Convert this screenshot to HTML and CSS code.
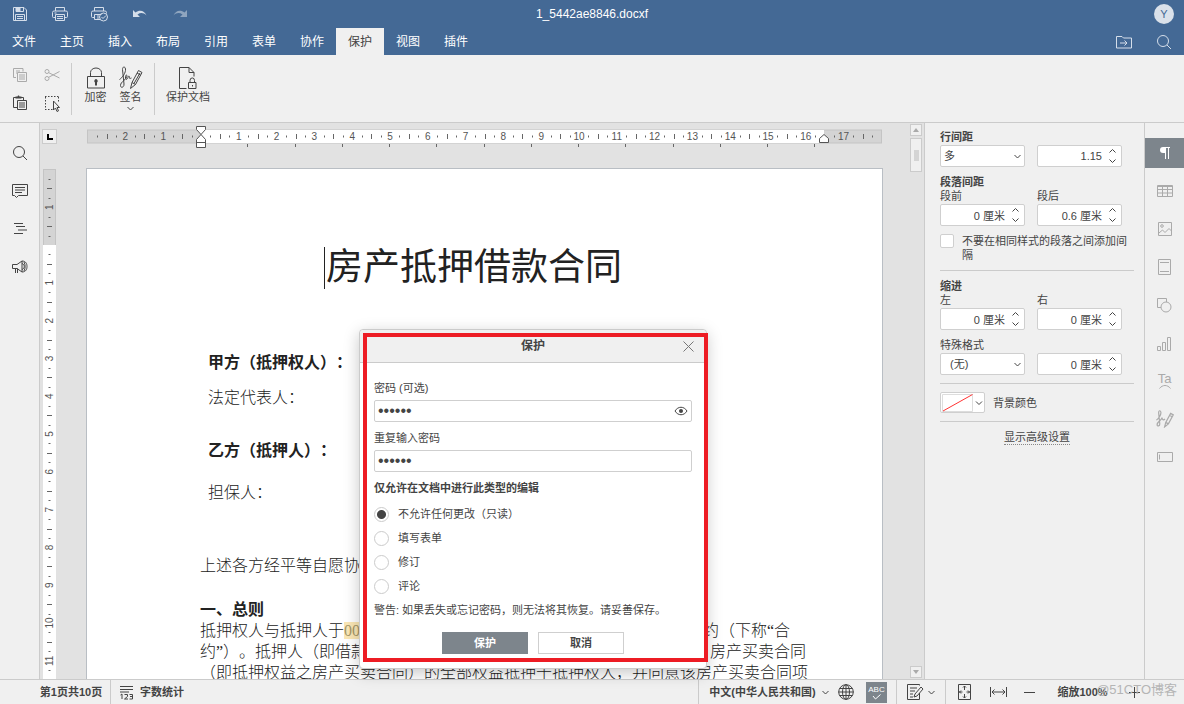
FILE: index.html
```
<!DOCTYPE html>
<html lang="zh-CN">
<head>
<meta charset="utf-8">
<title>1_5442ae8846.docxf</title>
<link rel="stylesheet" href="styles.css">
</head>
<body>
<div class="app">
  <header class="header">
    <div class="titlebar">
      <div class="quick">
        <button class="qbtn" aria-label="保存"><svg width="16" height="16" viewBox="0 0 16 16"><path d="M1.500 1.500h10.500l2.500 2.500v10.500h-13z M4 1.500v4h7.500v-4 M3.500 14.500v-6h9v6 M5 10.500h6 M5 12.500h6"/><path d="M4 2h4.500v3.500h-4.500z" class="solid"/></svg></button>
        <button class="qbtn" aria-label="打印"><svg width="16" height="16" viewBox="0 0 16 16"><path d="M3.500 5v-3.500h9v3.500 M3.500 11.500h-2a1 1 0 0 1-1-1v-4a1.500 1.500 0 0 1 1.500-1.500h12a1.500 1.500 0 0 1 1.500 1.500v4a1 1 0 0 1-1 1h-2 M3.500 8.500h9v6h-9z M5 10.500h6 M5 12.500h6 M2.500 7h2"/></svg></button>
        <button class="qbtn" aria-label="快速打印"><svg width="18" height="16" viewBox="0 0 18 16"><path d="M3.500 5v-3.500h9v3.500 M3.500 11.500h-2a1 1 0 0 1-1-1v-4a1.500 1.500 0 0 1 1.500-1.500h12a1.500 1.500 0 0 1 1.500 1.500v1 M9 13.500h-5.500v-5h7 M7 8.500v5"/><circle cx="12.500" cy="11" r="4"/><path d="M10.500 11l1.500 1.500 3-3"/></svg></button>
        <button class="qbtn" aria-label="撤消"><svg width="16" height="16" viewBox="0 0 16 16"><path class="solid" d="M1 4v7h7l-2.500-2.500c3-2 6-2 9 1-2-5-7-6-11-3z"/></svg></button>
        <button class="qbtn dim" aria-label="重做"><svg width="16" height="16" viewBox="0 0 16 16"><path class="solid" d="M15 4v7h-7l2.500-2.500c-3-2-6-2-9 1 2-5 7-6 11-3z"/></svg></button>
      </div>
      <div class="doc-name">1_5442ae8846.docxf</div>
      <div class="user"><span class="avatar">Y</span></div>
    </div>
    <nav class="tabs">
      <button>文件</button><button>主页</button><button>插入</button><button>布局</button><button>引用</button><button>表单</button><button>协作</button><button class="active">保护</button><button>视图</button><button>插件</button>
      <div class="tabs-right">
        <button class="qbtn" aria-label="打开文件所在位置"><svg width="16" height="14" viewBox="0 0 16 14"><path d="M.5 1.500h5.500l1.500 1.500h8v10h-15z M4 8h7 M8.500 5.500l2.500 2.500-2.500 2.500"/></svg></button>
        <button class="qbtn" aria-label="搜索"><svg width="16" height="16" viewBox="0 0 16 16"><circle cx="7" cy="7" r="5.500"/><path d="M11 11l4 4"/></svg></button>
      </div>
    </nav>
  </header>

  <div class="toolbar">
    <div class="clip-group">
      <button class="ico pale" aria-label="复制"><svg width="16" height="16" viewBox="0 0 16 16"><path d="M4 10.500h-2.500v-9h9.500v3 M4 4h4 M4 6h1 M5.500 5.500h9v9h-9z M7 8h6 M7 10h6 M7 12h6"/></svg></button>
      <button class="ico pale" aria-label="剪切"><svg width="16" height="14" viewBox="0 0 16 14"><circle cx="3" cy="3.500" r="2"/><circle cx="3" cy="10.500" r="2"/><path d="M4.700 4.700l10.800 5.300 M4.700 9.300l10.800-5.800"/></svg></button>
      <button class="ico" aria-label="粘贴"><svg width="16" height="16" viewBox="0 0 16 16"><path d="M5 12.500h-3.500v-10h10v3 M5.500 5.500h9v9h-9z M7 8h6 M7 10h6 M7 12h6"/><path class="solid" d="M3.500 3.500v-2h2l.5-1h1l.5 1h2v2z"/></svg></button>
      <button class="ico" aria-label="全选"><svg width="17" height="17" viewBox="0 0 17 17"><path stroke-dasharray="1.500 1.500" d="M1 1.500h14 M1 14.500h8 M1.500 2v13 M14.500 2v5"/><path d="M9.500 6v9l2-2 1.500 3.500 1.500-.7-1.500-3.300h2.500z" fill="#f0f0f0"/></svg></button>
    </div>
    <div class="tool-group">
      <button class="tool"><svg width="18" height="22" viewBox="0 0 18 22"><path d="M.5 9.500h17v11.500h-17z M3.500 9.500v-4a5.500 4.500 0 0 1 11 0v4"/><path class="solid" d="M9 12a2 2 0 0 1 1 3.500v3h-2v-3a2 2 0 0 1 1-3.500z"/></svg><span>加密</span></button>
      <button class="tool"><svg width="24" height="24" viewBox="0 0 24 24"><path d="M.5 13.500c3-2 6.500-7 6-10.500-.5-3-3-2.500-3 .5l1.500 14.500c.3 3.500-3.500 4.500-3.500 1.500 0-4 6.500-6 6.500-9.500 0-1.500-1.500-1-1.500.5v2c0 1.500 2 1 2.500-1 .5-2 1.500-2 1.500 0s1 .5 2 .5 M11.500 22.500l1.500-6 6.500-12 3.500 2-6.500 12z M13 16.500l3.500 2 M18 7l3.500 2 M15 17.500l6-10.500"/></svg><span>签名</span><svg class="caret" width="7" height="5" viewBox="0 0 7 5"><path d="M.5 1l3 3 3-3"/></svg></button>
    </div>
    <div class="tool-group">
      <button class="tool wide"><svg width="18" height="22" viewBox="0 0 18 22"><path d="M7.500 21.500h-7v-21h9.500l5 5v4 M10 .5v5h5 M9.500 15.500h7.500v6h-7.500z M11 15.500v-2a2.200 2.500 0 0 1 4.500 0v2 M13.500 18v1.500"/></svg><span>保护文档</span></button>
    </div>
  </div>

  <main class="main">
    <aside class="rail-left">
      <button class="ico" aria-label="查找"><svg width="16" height="16" viewBox="0 0 16 16"><circle cx="7" cy="7" r="5.500"/><path d="M11 11l4 4"/></svg></button>
      <button class="ico" aria-label="批注"><svg width="18" height="16" viewBox="0 0 18 16"><path d="M1.500 1.500h15v11h-9l-2 2-2-2h-2z M4 4.500h10 M4 7h10 M4 9.500h7"/></svg></button>
      <button class="ico" aria-label="标题"><svg width="16" height="14" viewBox="0 0 16 14"><path d="M2 1.500h9 M4 4.500h9 M6 8h9 M2 11.500h9"/></svg></button>
      <button class="ico" aria-label="反馈"><svg width="16" height="14" viewBox="0 0 16 14"><path d="M.5 4.500h4.500l5-3.500v11l-5-3.500h-4.500z M3.500 8.500v4.500 M5.500 8.500v4.500 M10 1c4 0 5 3 5 5.500s-1 5.500-5 5.500 M10 3.500c3 1 3 5 0 6 M12 2c1.500 3 1.500 6 0 9"/></svg></button>
    </aside>

    <section class="editor">
      <div class="tab-stop"><span></span></div>
      <svg class="ruler-h" id="rulerH" width="795" height="45" viewBox="0 0 795 45">
        <rect x=".5" y="7" width="794" height="13" class="r-out"/>
        <rect x="114" y="7" width="623" height="13" class="r-in"/>
        <g id="ticksH"></g>
        <path class="marker" d="M109.500 3.500h9v3l-4.500 5 4.500 5v8h-9v-8l4.500-5-4.500-5z M109.500 19.500h9"/>
        <path class="marker" d="M732.500 19.500v-4l4.500-4 4.500 4v4z"/>
      </svg>
      <div class="ruler-v"><svg id="rulerV" width="13" height="900" viewBox="0 0 13 900">
        <rect x=".5" y=".5" width="12" height="76" class="r-out"/>
        <rect x="0" y="76" width="13" height="900" class="r-in"/>
        <g id="ticksV"></g>
      </svg></div>
      <div class="canvas">
        <article class="page">
          <h1>房产抵押借款合同</h1>
          <p class="party">甲方（抵押权人）：</p>
          <p class="rep">法定代表人：</p>
          <p class="party second">乙方（抵押人）：</p>
          <p class="guard">担保人：</p>
          <p class="intro">上述各方经平等自愿协商</p>
          <h2>一、总则</h2>
          <p class="line first"><span>抵押权人与抵押人于<mark>00</mark></span><span>约（下称“合</span></p>
          <p class="line"><span>约”）。抵押人（即借款人</span><span>房产买卖合同</span></p>
          <p class="line">（即抵押权益之房产买卖合同）的全部权益抵押于抵押权人，并同意该房产买卖合同项</p>
        </article>
      </div>
      <div class="scroll">
        <button class="arrow" aria-label="向上滚动"><svg width="6" height="4" viewBox="0 0 6 4"><path d="M0 4l3-4 3 4z"/></svg></button>
        <div class="thumb"></div>
        <button class="arrow end" aria-label="向下滚动"><svg width="6" height="4" viewBox="0 0 6 4"><path d="M0 0l3 4 3-4z"/></svg></button>
      </div>
    </section>

    <aside class="settings">
      <h3>行间距</h3>
      <div class="pair">
        <div class="combo"><select aria-label="行间距"><option>多</option></select><svg width="7" height="5" viewBox="0 0 7 5"><path d="M.5 1l3 3 3-3"/></svg></div>
        <div class="spin"><input aria-label="行距值" value="1.15"><svg width="7" height="14" viewBox="0 0 7 14"><path d="M.5 3.500l3-3 3 3 M.5 10.500l3 3 3-3"/></svg></div>
      </div>
      <h3 class="gap">段落间距</h3>
      <div class="pair">
        <label for="before">段前</label><label for="after">段后</label>
        <div class="spin"><input id="before" value="0 厘米"><svg width="7" height="14" viewBox="0 0 7 14"><path d="M.5 3.500l3-3 3 3 M.5 10.500l3 3 3-3"/></svg></div>
        <div class="spin"><input id="after" value="0.6 厘米"><svg width="7" height="14" viewBox="0 0 7 14"><path d="M.5 3.500l3-3 3 3 M.5 10.500l3 3 3-3"/></svg></div>
      </div>
      <label class="check"><input type="checkbox"><span>不要在相同样式的段落之间添加间隔</span></label>
      <hr>
      <h3>缩进</h3>
      <div class="pair">
        <label for="left">左</label><label for="right">右</label>
        <div class="spin"><input id="left" value="0 厘米"><svg width="7" height="14" viewBox="0 0 7 14"><path d="M.5 3.500l3-3 3 3 M.5 10.500l3 3 3-3"/></svg></div>
        <div class="spin"><input id="right" value="0 厘米"><svg width="7" height="14" viewBox="0 0 7 14"><path d="M.5 3.500l3-3 3 3 M.5 10.500l3 3 3-3"/></svg></div>
      </div>
      <div class="pair gap">
        <label class="full" for="special">特殊格式</label>
        <div class="combo inset"><select id="special"><option>(无)</option></select><svg width="7" height="5" viewBox="0 0 7 5"><path d="M.5 1l3 3 3-3"/></svg></div>
        <div class="spin"><input aria-label="特殊格式值" value="0 厘米"><svg width="7" height="14" viewBox="0 0 7 14"><path d="M.5 3.500l3-3 3 3 M.5 10.500l3 3 3-3"/></svg></div>
      </div>
      <hr>
      <div class="color-row">
        <button class="color" id="bg" aria-label="背景颜色"><svg width="44" height="21" viewBox="0 0 44 21"><path class="sw" d="M1.500 1.500h30v17h-30z"/><path class="no" d="M2 18l29.500-16.500"/><path d="M35 8.500l3 3 3-3"/></svg></button>
        <label for="bg">背景颜色</label>
      </div>
      <hr>
      <a class="more" href="#">显示高级设置</a>
    </aside>

    <aside class="rail-right">
      <button class="active" aria-label="段落设置"><svg width="16" height="16" viewBox="0 0 16 16"><path class="solid" d="M6 2h7v1h-1v11h-1v-11h-2v11h-1v-6h-2a3 3 0 0 1 0-6z"/></svg></button>
      <button aria-label="表格设置"><svg width="16" height="12" viewBox="0 0 16 12"><path d="M.5 .5h15v11h-15z M.5 1.500h15 M.5 4.500h15 M.5 8h15 M5.500 1v10 M10.500 1v10"/></svg></button>
      <button aria-label="图像设置"><svg width="14" height="14" viewBox="0 0 14 14"><path d="M.5 .5h13v13h-13z M1 11l3.500-3 2.500 2.500 4-4 2.500 2.500"/><circle cx="4" cy="4" r="1.300"/></svg></button>
      <button aria-label="页眉页脚设置"><svg width="13" height="16" viewBox="0 0 13 16"><path d="M.5 .5h12v15h-12z M2 3.500h9 M2 12.500h9"/></svg></button>
      <button aria-label="形状设置"><svg width="15" height="15" viewBox="0 0 15 15"><path d="M4 9.500h-3.500v-9h9v3.500"/><circle cx="9" cy="9" r="5"/></svg></button>
      <button aria-label="图表设置"><svg width="15" height="15" viewBox="0 0 15 15"><path d="M.5 10.500h3v4h-3z M5.500 6.500h3v8h-3z M10.500 1.500h3v13h-3z"/></svg></button>
      <button aria-label="艺术字设置"><span class="ta">Ta</span><svg width="12" height="4" viewBox="0 0 12 4"><path d="M.5 3.500c3-4 8-4 11 0"/></svg></button>
      <button aria-label="签名设置"><svg width="18" height="18" viewBox="0 0 24 24"><path stroke-width="1.600" d="M.5 13.500c3-2 6.500-7 6-10.500-.5-3-3-2.500-3 .5l1.500 14.500c.3 3.500-3.500 4.500-3.500 1.500 0-4 6.500-6 6.500-9.500 0 3 2 4 4 2 M11.500 22.500l1.500-6 6.500-12 3.500 2-6.500 12z M13 16.500l3.500 2 M18 7l3.500 2"/></svg></button>
      <button aria-label="表单设置"><svg width="16" height="10" viewBox="0 0 16 10"><path d="M.5 .5h15v9h-15z M2.500 2.500v5"/></svg></button>
    </aside>
  </main>

  <footer class="status">
    <button class="pages">第1页共10页</button>
    <button class="count"><svg width="13" height="15" viewBox="0 0 13 15"><path d="M0 1.500h13 M0 4.500h13 M0 7h9 M2 9v5 M.5 10l1.500-1 M4.500 9.500h3v2l-3 2.500h3.500 M9.500 9.500h3v4.500h-3 M10 11.500h2.500"/></svg><span>字数统计</span></button>
    <div class="status-right">
      <button class="lang">中文(中华人民共和国)<svg width="7" height="5" viewBox="0 0 7 5"><path d="M.5 1l3 3 3-3"/></svg></button>
      <button class="globe" aria-label="文档语言"><svg width="16" height="16" viewBox="0 0 16 16"><circle cx="8" cy="8" r="7.300"/><ellipse cx="8" cy="8" rx="3.500" ry="7.300"/><path d="M8 .5v15 M.5 8h15 M1.500 4.500h13 M1.500 11.500h13"/></svg></button>
      <button class="spell" aria-label="拼写检查"><span>ABC</span><svg width="9" height="6" viewBox="0 0 9 6"><path d="M1 2l2.500 3 5-4.500"/></svg></button>
      <button class="track" aria-label="跟踪修订"><svg width="17" height="16" viewBox="0 0 17 16"><path d="M12.500 9v6.500h-12v-15h12v1 M3 4h7 M3 7h5 M3 10h3 M3 13h3 M8 10l6-7 2 2-6 7-3 1z"/></svg><svg width="7" height="5" viewBox="0 0 7 5"><path d="M.5 1l3 3 3-3"/></svg></button>
      <button class="fit" aria-label="适合页面"><svg width="13" height="16" viewBox="0 0 13 16"><path d="M.5 .5h12v15h-12z M6.500 2v4 M5 3.500l1.500-1.500 1.500 1.500 M6.500 10v4 M5 12.500l1.500 1.500 1.500-1.500 M0 8h4.500 M3 6.500l-1.500 1.500 1.500 1.500 M8.500 8h4 M10 6.500l1.500 1.500-1.500 1.500"/></svg></button>
      <button class="fit" aria-label="适合宽度"><svg width="17" height="12" viewBox="0 0 17 12"><path d="M.5 1v10 M16.500 1v10 M2 6h13 M4.500 3.500l-2.500 2.500 2.500 2.500 M12.500 3.500l2.500 2.500-2.500 2.500"/></svg></button>
      <button class="fit" aria-label="缩小"><svg width="11" height="11" viewBox="0 0 11 11"><path d="M0 5.500h11"/></svg></button>
      <button class="zoom">缩放100%</button>
      <button class="plus" aria-label="放大"><svg width="11" height="11" viewBox="0 0 11 11"><path d="M0 5.500h11 M5.500 0v11"/></svg></button>
    </div>
  </footer>
  <div class="watermark">@51CTO博客</div>

  <form class="dialog" role="dialog" aria-labelledby="dlgTitle">
    <div class="dlg-head"><h2 id="dlgTitle">保护</h2><button type="button" class="close" aria-label="关闭"><svg width="11" height="11" viewBox="0 0 11 11"><path d="M.5 .5l10 10 M10.500 .5l-10 10"/></svg></button></div>
    <div class="dlg-body">
      <label for="pw1">密码 (可选)</label>
      <div class="pw"><input id="pw1" type="password" value="123456"><svg width="14" height="10" viewBox="0 0 14 10"><path d="M1 5c3-5 9-5 12 0-3 5-9 5-12 0z"/><circle class="solid" cx="7" cy="5" r="2"/></svg></div>
      <label for="pw2">重复输入密码</label>
      <div class="pw"><input id="pw2" type="password" value="123456"></div>
      <strong>仅允许在文档中进行此类型的编辑</strong>
      <div class="radios">
        <label><input type="radio" name="mode" checked>不允许任何更改（只读）</label>
        <label><input type="radio" name="mode">填写表单</label>
        <label><input type="radio" name="mode">修订</label>
        <label><input type="radio" name="mode">评论</label>
      </div>
      <p>警告: 如果丢失或忘记密码，则无法将其恢复。请妥善保存。</p>
      <div class="actions"><button type="button" class="primary">保护</button><button type="button">取消</button></div>
    </div>
    <div class="highlight"></div>
  </form>
</div>
<script src="rulers.js"></script>
</body>
</html>
```
FILE: styles.css
```
* { box-sizing: border-box; }
body { margin: 0; font: 11px/14px "Liberation Sans", "Noto Sans CJK SC", sans-serif; color: #444; text-spacing-trim: space-all; }
h1, h2, h3, p { margin: 0; }
button { border: 0; padding: 0; margin: 0; background: none; font: inherit; color: inherit; }
input, select { font: inherit; color: inherit; margin: 0; }
svg { display: block; flex: none; fill: none; stroke: currentColor; stroke-width: 1; }
svg .solid { fill: currentColor; stroke: none; }

.app { display: flex; flex-direction: column; height: 100vh; overflow: hidden; background: #f0f0f0; position: relative; }

.header { background: #446995; color: #fff; font-size: 12px; }
.titlebar { display: grid; grid-template-columns: 1fr auto 1fr; align-items: center; height: 28px; }
.quick { display: flex; }
.qbtn { width: 40px; height: 28px; display: flex; align-items: center; justify-content: center; color: #d5deea; }
.qbtn.dim { color: #8fa5bf; }
.user { display: flex; justify-content: flex-end; padding-right: 10px; }
.avatar { width: 20px; height: 20px; border-radius: 50%; background: #dae1ea; color: #446995; text-align: center; line-height: 20px; font-size: 11px; }
.tabs { display: flex; height: 27px; }
.tabs > button { width: 48px; line-height: 28px; }
.tabs > .active { background: #f0f0f0; color: #444; }
.tabs-right { margin-left: auto; display: flex; }

.toolbar { display: flex; height: 68px; padding: 8px 0 7px; border-bottom: 1px solid #cbcbcb; flex: none; }
.clip-group { display: grid; grid-template-columns: 32px 32px; padding: 0 3px 0 4px; border-right: 1px solid #cbcbcb; align-content: center; row-gap: 12px; }
.ico { display: flex; align-items: center; justify-content: center; color: #444; }
.pale { color: #aaa; }
.tool-group { display: flex; padding: 0 6px; border-right: 1px solid #cbcbcb; }
.tool-group:last-child { border: 0; }
.tool { width: 35px; display: flex; flex-direction: column; align-items: center; padding-top: 3px; }
.tool > svg:first-child { height: 24px; }
.tool .caret { margin-top: 2px; }
.tool.wide { width: 54px; }
.tool span { white-space: nowrap; }

.main { flex: 1; min-height: 0; display: flex; }
.rail-left { width: 40px; border-right: 1px solid #cbcbcb; padding-top: 11px; display: flex; flex-direction: column; }
.rail-left .ico { height: 38px; }

.editor { flex: 1; min-width: 0; background: #e2e2e2; display: grid; grid-template: 45px 1fr / 19px 1fr 14px; overflow: hidden; }
.tab-stop { width: 15px; height: 15px; margin: 6px 0 0 2px; border: 1px solid #cbcbcb; background: #f0f0f0; display: flex; align-items: center; justify-content: center; }
.tab-stop span { width: 6px; height: 6px; border-left: 2px solid #000; border-bottom: 2px solid #000; }
.ruler-h { grid-area: 1 / 2; justify-self: center; }
.ruler-v { grid-area: 2 / 1; padding: 1px 0 0 3px; overflow: hidden; min-height: 0; }
.r-out { fill: #d4d4d4; stroke: #c4c4c4; }
.r-in { fill: #fff; stroke: none; }
.tick { stroke: #666; }
.num { fill: #555; stroke: none; font: 10px "Liberation Sans", sans-serif; text-anchor: middle; }
.marker { fill: #fff; stroke: #555; }
.canvas { grid-area: 2 / 2; overflow: hidden; min-height: 0; display: flex; justify-content: center; }
.page { width: 797px; flex: none; min-height: 1123px; background: #fff; border: 1px solid #b9bec4; padding: 78px 60px 0 113px; font: 300 16px/22px "Liberation Serif", "Noto Sans CJK SC", serif; color: #222; }
.page p, .page h2 { white-space: nowrap; }
.page h1 { width: max-content; margin-left: 124px; border-left: 1px solid #222; padding-left: 1px; font-size: 37px; line-height: 42px; font-weight: 400; }
.page .party { margin: 63px 0 0 8px; font-weight: 700; }
.page .rep { margin: 13px 0 0 8px; }
.page .second { margin-top: 31px; }
.page .guard { margin: 20px 0 0 8px; }
.page .intro { margin-top: 51px; }
.page h2 { margin-top: 22px; font-size: 16px; line-height: 21px; font-weight: 700; }
.page .line { display: flex; justify-content: space-between; width: 606px; line-height: 21px; }
.page .first { width: 590px; }
mark { background: #fbe7b5; color: #a59768; }
.scroll { grid-area: 1 / 3 / 3; display: flex; flex-direction: column; gap: 2px; padding: 1px 2px 1px 0; }
.arrow { height: 12px; border: 1px solid #cbcbcb; background: #f0f0f0; display: flex; align-items: center; justify-content: center; }
.arrow svg { fill: #aaa; stroke: none; }
.end { margin-top: auto; }
.thumb { height: 34px; border: 1px solid #cbcbcb; background: linear-gradient(#d4d4d4, #d4d4d4) center / 5px 11px no-repeat #f0f0f0; }

.settings { width: 221px; border-left: 1px solid #cbcbcb; border-right: 1px solid #cbcbcb; padding: 7px 10px 0 15px; }
.settings h3 { font-size: 11px; line-height: 14px; margin-bottom: 1px; }
.settings h3:has(+ .pair > label) { margin-bottom: 0; }
.settings .gap { margin-top: 8px; }
.pair { display: grid; grid-template-columns: 85px 85px; column-gap: 12px; row-gap: 1px; }
.full { grid-column: 1 / 3; }
.combo, .spin { position: relative; height: 22px; }
.combo select, .spin input { width: 100%; height: 22px; appearance: none; border: 1px solid #cfcfcf; border-radius: 2px; background: #fff; padding: 0 18px 0 3px; display: block; }
.spin input { text-align: right; padding-right: 19px; }
.inset select { padding-left: 9px; }
.combo svg, .spin svg { position: absolute; right: 4px; top: 9px; pointer-events: none; }
.spin svg { right: 6px; top: 4px; }
.check { display: flex; gap: 8px; margin-top: 8px; }
.check input { appearance: none; width: 14px; height: 14px; flex: none; border: 1px solid #cfcfcf; border-radius: 2px; background: #fff; }
.settings hr { border: 0; border-top: 1px solid #cbcbcb; margin: 8px 0; }
.color-row { display: flex; gap: 8px; align-items: center; height: 21px; line-height: 12px; }
.color { border: 1px solid #cfcfcf; border-radius: 2px; background: #fff; height: 21px; width: 45px; overflow: hidden; }
.color .sw { stroke: #ddd; }
.color .no { stroke: #f33; }
.more { display: block; width: max-content; margin: 0 auto; color: #444; text-decoration: none; border-bottom: 1px dotted #888; line-height: 14px; }

.rail-right { width: 39px; padding-top: 11px; display: flex; flex-direction: column; }
.rail-right button { height: 30px; margin: 4px 0; display: flex; flex-direction: column; align-items: center; justify-content: center; color: #aaa; }
.rail-right .active { background: #7d858c; color: #fff; }
.ta { font-size: 13px; line-height: 12px; }

.status { height: 25px; flex: none; border-top: 1px solid #cbcbcb; display: flex; font-weight: 700; }
.status button { display: flex; align-items: center; justify-content: center; white-space: nowrap; }
.status .pages { width: 111px; padding-left: 32px; border-right: 1px solid #cbcbcb; }
.status .count { gap: 7px; padding-left: 9px; }
.status-right { margin-left: auto; display: flex; border-left: 1px solid #cbcbcb; }
.status .lang { gap: 6px; width: 135px; padding-left: 5px; }
.status .globe { width: 24px; }
.status .spell { width: 21px; height: 21px; margin: 2px 9px 0 8px; background: #7d858c; color: #fff; flex-direction: column; font-size: 8px; line-height: 8px; font-weight: 400; }
.status .track { width: 50px; gap: 4px; border: solid #cbcbcb; border-width: 0 1px; }
.status .fit { width: 31px; }
.status .track + .fit { width: 37px; }
.status .zoom { width: 75px; }
.status .plus { width: 29px; margin-right: 35px; }
.watermark { position: absolute; right: 7px; bottom: 5px; font-size: 13px; line-height: 18px; color: #b5b5b5; pointer-events: none; }

.dialog { position: absolute; left: 359px; top: 329px; width: 348px; background: #fff; border: 1px solid #cbcbcb; border-radius: 4px; box-shadow: 0 4px 16px rgba(0, 0, 0, .22); }
.dlg-head { height: 33px; background: #f0f0f0; border-bottom: 1px solid #cbcbcb; border-radius: 4px 4px 0 0; display: grid; grid-template-columns: 24px 1fr 24px; align-items: center; padding: 0 6px; }
.dlg-head h2 { grid-column: 2; text-align: center; font-size: 12px; line-height: 16px; }
.close { display: flex; justify-content: center; color: #777; }
.dlg-body { display: flex; flex-direction: column; padding: 18px 14px 14px; }
.pw { position: relative; margin: 5px 0 9px; }
.pw input { width: 100%; height: 22px; display: block; border: 1px solid #cfcfcf; border-radius: 2px; padding: 0 3px; font-size: 16px; }
.pw svg { position: absolute; right: 4px; top: 6px; }
.dlg-body strong { line-height: 14px; }
.radios { display: flex; flex-direction: column; margin-top: 7px; }
.radios label { display: flex; align-items: center; gap: 9px; height: 24px; }
.radios input { appearance: none; width: 15px; height: 15px; border: 1px solid #cbcbcb; border-radius: 50%; background: #fff; }
.radios input:checked { background: radial-gradient(circle, #444 4px, #fff 5px); }
.dlg-body p { margin-top: 5px; }
.actions { display: flex; justify-content: center; gap: 10px; margin-top: 15px; }
.actions button { width: 86px; height: 22px; border: 1px solid #cfcfcf; font-weight: 700; }
.actions .primary { background: #7d858c; border-color: #7d858c; color: #fff; }
.highlight { position: absolute; inset: 3px -2px 6px 3px; border: 4px solid #ed1c24; pointer-events: none; }
```
FILE: rulers.js
```
const CM = 37.8;
const NS = 'http://www.w3.org/2000/svg';

function add(parent, name, attrs, text) {
  const el = document.createElementNS(NS, name);
  for (const key in attrs) el.setAttribute(key, attrs[key]);
  if (text !== undefined) el.textContent = text;
  parent.appendChild(el);
}

const h = document.getElementById('ticksH');
for (let q = -11; q <= 71; q++) {
  if (q === 0 || q === 66) continue;
  const x = 114 + q * CM / 4;
  if (q % 4 === 0) {
    add(h, 'text', { x, y: 17, class: 'num' }, Math.abs(q / 4));
  } else {
    const half = q % 2 === 0 ? 2.5 : 1;
    const px = Math.round(x) + 0.5;
    add(h, 'path', { d: `M${px} ${13.5 - half}v${half * 2}`, class: 'tick' });
  }
}
for (let i = 1; i <= 13; i++) {
  add(h, 'path', { d: `M${Math.round(114 + i * 47.25) - 0.5} 21v3`, class: 'tick' });
}

const v = document.getElementById('ticksV');
const visible = v.ownerSVGElement.parentElement.clientHeight;
for (let q = -7; 76 + q * CM / 4 < visible - 8; q++) {
  if (q === 0) continue;
  const y = 76 + q * CM / 4;
  if (q % 4 === 0) {
    add(v, 'text', { x: 0, y: 0, class: 'num', transform: `translate(10 ${y}) rotate(-90)` }, Math.abs(q / 4));
  } else {
    const half = q % 2 === 0 ? 2.5 : 1;
    const py = Math.round(y) + 0.5;
    add(v, 'path', { d: `M${6.5 - half} ${py}h${half * 2}`, class: 'tick' });
  }
}
```
